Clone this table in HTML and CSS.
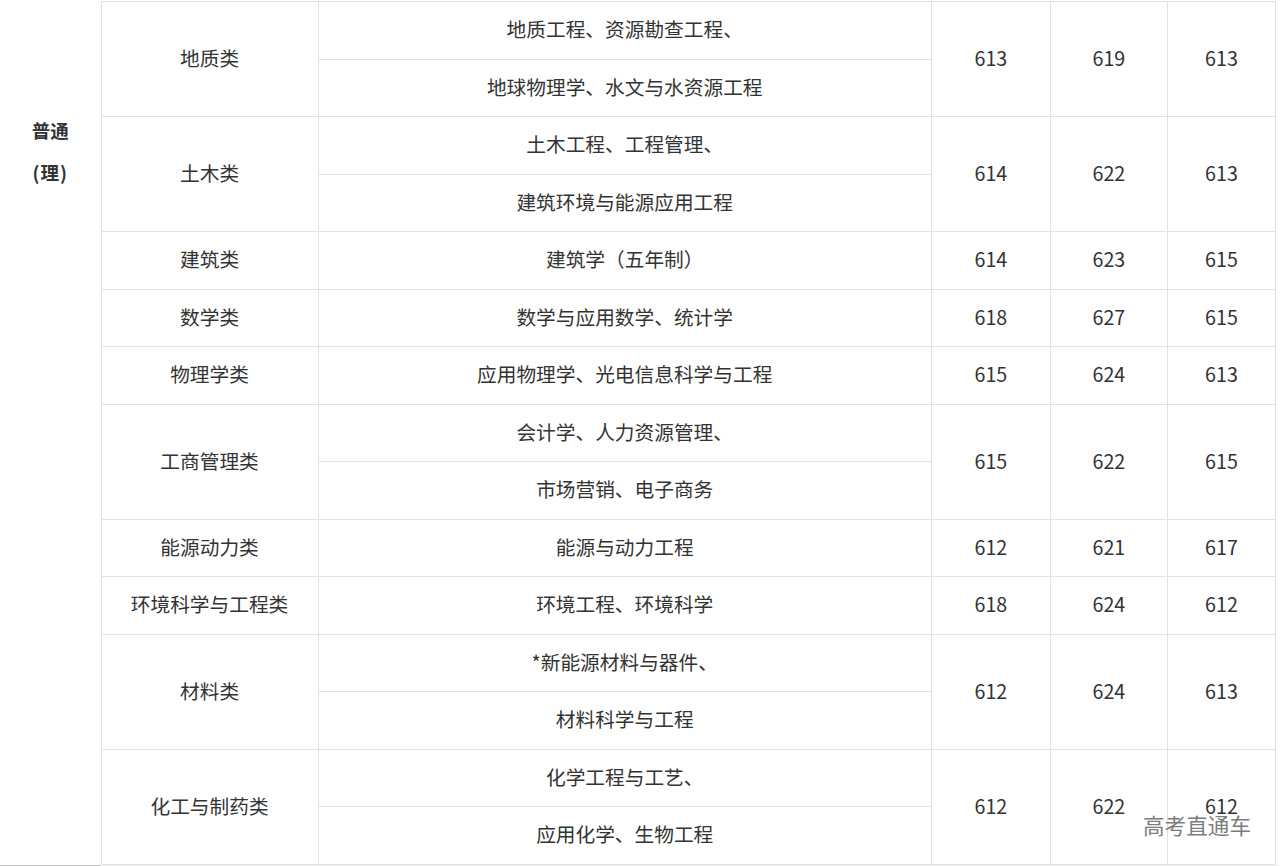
FILE: index.html
```html
<!DOCTYPE html>
<html lang="zh">
<head>
<meta charset="utf-8">
<title>分数线</title>
<link rel="stylesheet" href="styles.css">
</head>
<body>
<div class="wrap">
<table class="scores">
<colgroup>
<col class="c1"><col class="c2"><col class="c3"><col class="c4"><col class="c5"><col class="c6">
</colgroup>
<tbody>
<tr>
<td class="kind" rowspan="15"><div class="kind-text"><p>普通</p><p>(理)</p></div></td>
<td rowspan="2">地质类</td><td>地质工程、资源勘查工程、</td><td rowspan="2">613</td><td rowspan="2">619</td><td rowspan="2">613</td>
</tr>
<tr><td>地球物理学、水文与水资源工程</td></tr>
<tr><td rowspan="2">土木类</td><td>土木工程、工程管理、</td><td rowspan="2">614</td><td rowspan="2">622</td><td rowspan="2">613</td></tr>
<tr><td>建筑环境与能源应用工程</td></tr>
<tr><td>建筑类</td><td>建筑学（五年制）</td><td>614</td><td>623</td><td>615</td></tr>
<tr><td>数学类</td><td>数学与应用数学、统计学</td><td>618</td><td>627</td><td>615</td></tr>
<tr><td>物理学类</td><td>应用物理学、光电信息科学与工程</td><td>615</td><td>624</td><td>613</td></tr>
<tr><td rowspan="2">工商管理类</td><td>会计学、人力资源管理、</td><td rowspan="2">615</td><td rowspan="2">622</td><td rowspan="2">615</td></tr>
<tr><td>市场营销、电子商务</td></tr>
<tr><td>能源动力类</td><td>能源与动力工程</td><td>612</td><td>621</td><td>617</td></tr>
<tr><td>环境科学与工程类</td><td>环境工程、环境科学</td><td>618</td><td>624</td><td>612</td></tr>
<tr><td rowspan="2">材料类</td><td>*新能源材料与器件、</td><td rowspan="2">612</td><td rowspan="2">624</td><td rowspan="2">613</td></tr>
<tr><td>材料科学与工程</td></tr>
<tr><td rowspan="2">化工与制药类</td><td>化学工程与工艺、</td><td rowspan="2">612</td><td rowspan="2">622</td><td rowspan="2">612</td></tr>
<tr><td>应用化学、生物工程</td></tr>
</tbody>
</table>
<div class="scrollbar"><div class="thumb"></div></div>
<div class="watermark">高考直通车</div>
</div>
</body>
</html>
```
FILE: styles.css
```css
html, body {
  margin: 0;
  padding: 0;
  background: #fff;
}
.wrap {
  position: relative;
  width: 1280px;
  height: 866px;
  overflow: hidden;
  padding-top: 1px;
  box-sizing: border-box;
}
.scores {
  border-collapse: collapse;
  table-layout: fixed;
  width: 1276px;
  font-family: "Noto Sans CJK SC", "Noto Sans", sans-serif;
  font-size: 19.7px;
  color: #333;
}
.c1 { width: 101px; }
.c2 { width: 217px; }
.c3 { width: 613px; }
.c4 { width: 119px; }
.c5 { width: 117px; }
.c6 { width: 108px; }
.scores tr {
  height: 57.5px;
}
.scores td {
  border: 1px solid #e2e2e2;
  padding: 0 0 3px 0;
  text-align: center;
  vertical-align: middle;
  white-space: nowrap;
}
.scores td.kind {
  border-top: none;
  border-left: none;
  border-bottom: none;
  padding: 0;
  vertical-align: top;
}
.kind-text {
  padding-top: 107px;
  font-weight: bold;
  font-size: 18.5px;
  color: #333;
}
.kind-text p {
  margin: 0;
  line-height: 42px;
}
.kind-text p + p {
  letter-spacing: 1px;
}
.scrollbar {
  height: 2px;
  background: #f1f1f1;
  width: 1280px;
}
.thumb {
  width: 101px;
  height: 2px;
  background: #c1c1c1;
}
.watermark {
  position: absolute;
  left: 1143px;
  top: 810px;
  font-family: "Noto Sans CJK SC", sans-serif;
  font-size: 21.6px;
  color: #7d7d7d;
  line-height: 30px;
}
```
